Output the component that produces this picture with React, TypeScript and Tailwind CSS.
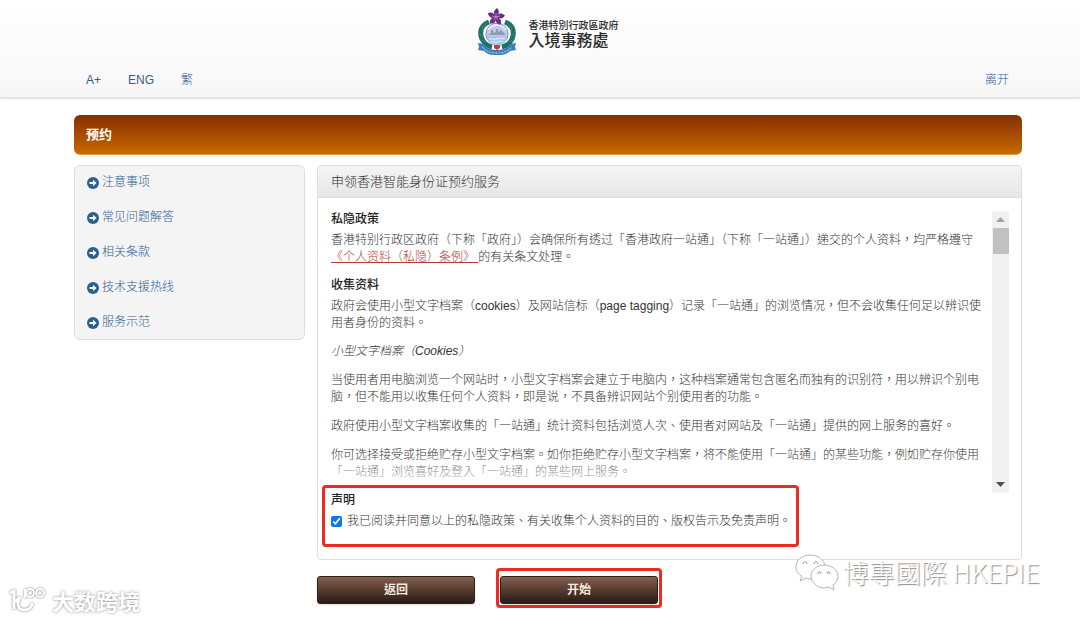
import { useState } from "react";

const menuItems = ["注意事项", "常见问题解答", "相关条款", "技术支援热线", "服务示范"];

const ArrowIcon = () => (
  <svg className="w-3 h-3 shrink-0" viewBox="0 0 12 12" aria-hidden="true">
    <circle cx="6" cy="6" r="6" fill="#2a6092" />
    <path d="M2.500 5H6V2.800L9.600 6 6 9.200V7H2.500z" fill="#fff" />
  </svg>
);

const Emblem = () => (
  <svg className="w-10 h-12" viewBox="0 0 40 48" fill="none" aria-hidden="true">
    {/* wreath */}
    <path d="M12 14C4 17 2 24 5 31c2 4 5 7 10 8" stroke="#1f6f63" strokeWidth="5" />
    <path d="M28 14c8 3 10 10 7 17-2 4-5 7-10 8" stroke="#1f6f63" strokeWidth="5" />
    <path d="M10 14l-3 5M5 18l1 6M2 25l4 4M4 32l5 2M30 14l3 5M35 18l-1 6M38 25l-4 4M36 32l-5 2" stroke="#4d9488" strokeWidth=".8" />
    {/* harbour */}
    <circle cx="20" cy="26" r="11" fill="#c3c9e8" stroke="#8391b4" />
    <path d="M10 28h20a10 10 0 0 1-20 0z" fill="#a9c5ea" />
    <path d="M11 27l3-2v-3h2v3l3-1v-3h2v3l3-2 5 5z" fill="#8f98b8" />
    <path d="M11 22c3-4 6-5 9-5s6 1 9 5" stroke="#e6e9f8" strokeWidth="2" />
    <path d="M12 31c3-1 5 1 8 0s5-1 8 0M14 34c2-1 4 1 6 0s4-1 6 0" stroke="#eef4fc" />
    {/* bauhinia */}
    <g fill="#6a2c86">
      <path d="M19 9c-3-3-3-6 1-9 3 3 2 6-1 9z" />
      <path d="M19 9c-3-3-3-6 1-9 3 3 2 6-1 9z" transform="rotate(72 19 9)" />
      <path d="M19 9c-3-3-3-6 1-9 3 3 2 6-1 9z" transform="rotate(144 19 9)" />
      <path d="M19 9c-3-3-3-6 1-9 3 3 2 6-1 9z" transform="rotate(216 19 9)" />
      <path d="M19 9c-3-3-3-6 1-9 3 3 2 6-1 9z" transform="rotate(288 19 9)" />
    </g>
    <path d="M19 9V5M19 9l4-1M19 9l2 3M19 9l-2 3M19 9l-4-1" stroke="#d9bfe4" strokeWidth=".6" />
    {/* ribbon */}
    <path d="M1 35l6 1c3 5 8 6 13 6s10-1 13-6l6-1-1 4 1 3-6 1c-4 4-8 4-13 4s-9 0-13-4l-6-1 1-3z" fill="#3e7fb8" />
    <path d="M5 39c5 5 9 6 15 6s10-1 15-6" stroke="#b9d4ea" strokeDasharray="2 1" />
    <path d="M17 37h6v3l-3 2-3-2z" fill="#c53a4c" />
  </svg>
);

const Header = () => (
  <header className="h-[98px] pl-[86px] pr-[71px] flex flex-col justify-between bg-gradient-to-b from-white to-[#f7f7f7] border-b border-[#e2e2e2] shadow-sm">
    <div className="flex justify-center items-center gap-3 pt-2">
      <Emblem />
      <div className="flex flex-col pt-1 text-[#2c2c2c]">
        <span className="text-[10px] leading-[14px] font-medium">香港特別行政區政府</span>
        <span className="text-base leading-4 font-medium">入境事務處</span>
      </div>
    </div>
    <nav className="flex items-center pb-2 text-xs leading-[17px] text-[#2f5f8f]">
      <a href="#" className="mr-[27px]">A+</a>
      <a href="#" className="mr-[27px]">ENG</a>
      <a href="#" className="font-light">繁</a>
      <a href="#" className="ml-auto font-light">离开</a>
    </nav>
  </header>
);

const Sidebar = () => (
  <aside className="w-[231px] shrink-0 px-3 bg-[#f4f4f4] border border-[#dedede] rounded-md">
    <ul className="flex flex-col gap-[18px] pt-2 pb-2">
      {menuItems.map((item) => (
        <li key={item}>
          <a href="#" className="flex items-center gap-[3px] text-xs leading-[17px] font-light text-[#2f5f8f]">
            <ArrowIcon />
            {item}
          </a>
        </li>
      ))}
    </ul>
  </aside>
);

const ScrollBar = () => (
  <div className="w-[17px] shrink-0 flex flex-col items-center justify-between bg-[#f1f1f1]" aria-hidden="true">
    <div className="w-full flex flex-col items-center">
      <svg className="w-[17px] h-[17px]" viewBox="0 0 17 17">
        <path d="M4 11l4.500-5 4.500 5z" fill="#a3a3a3" />
      </svg>
      <div className="w-4 h-[26px] bg-[#c1c1c1]" />
    </div>
    <svg className="w-[17px] h-[17px]" viewBox="0 0 17 17">
      <path d="M4 6h9l-4.500 5z" fill="#505050" />
    </svg>
  </div>
);

const Policy = () => (
  <div className="relative h-[282px] flex-1 min-w-0 overflow-hidden">
    <h3 className="font-medium mb-1 text-[#222]">私隐政策</h3>
    <p className="mb-[11px]">
      香港特别行政区政府（下称「政府」）会确保所有透过「香港政府一站通」（下称「一站通」）递交的个人资料，均严格遵守
      <br />
      <a href="#" className="text-[#b23b3b] underline decoration-[#b23b3b]">《个人资料（私隐）条例》 </a>
      的有关条文处理。
    </p>
    <h3 className="font-medium mb-1 text-[#222]">收集资料</h3>
    <p className="mb-[11px]">
      政府会使用小型文字档案（cookies）及网站信标（page tagging）记录「一站通」的浏览情况，但不会收集任何足以辨识使用者身份的资料。
    </p>
    <p className="mb-3 italic">小型文字档案（Cookies）</p>
    <p className="mb-3">
      当使用者用电脑浏览一个网站时，小型文字档案会建立于电脑内，这种档案通常包含匿名而独有的识别符，用以辨识个别电脑，但不能用以收集任何个人资料，即是说，不具备辨识网站个别使用者的功能。
    </p>
    <p className="mb-3">
      政府使用小型文字档案收集的「一站通」统计资料包括浏览人次、使用者对网站及「一站通」提供的网上服务的喜好。
    </p>
    <p>
      你可选择接受或拒绝贮存小型文字档案。如你拒绝贮存小型文字档案，将不能使用「一站通」的某些功能，例如贮存你使用「一站通」浏览喜好及登入「一站通」的某些网上服务。
    </p>
    <div className="absolute inset-x-0 bottom-0 h-10 bg-gradient-to-b from-transparent to-white" />
  </div>
);

const buttonClass =
  "w-[158px] h-7 rounded-[3px] border border-[#2b1d18] bg-gradient-to-b from-[#84604f] to-[#2a1b15] text-xs font-bold text-[#f6e9df] shadow-sm cursor-pointer";

const App = () => {
  const [agreed, setAgreed] = useState(true);

  return (
    <div className="relative min-h-screen bg-white text-xs leading-[17px] text-[#333] font-['Liberation_Sans','Noto_Sans_CJK_TC',sans-serif]">
      <Header />
      <main className="pl-[74px] pr-[58px] pt-[17px] pb-3">
        <h1 className="h-10 px-3 flex items-center rounded-md border-b border-[#e09a3a] bg-gradient-to-b from-[#852f00] to-[#c96a00] text-[13px] font-bold text-white">
          预约
        </h1>
        <div className="flex items-start gap-3 mt-[10px]">
          <Sidebar />
          <div className="flex-1 min-w-0">
            <section className="border border-[#dedede] rounded-[4px] pb-3">
              <h2 className="h-8 px-[13px] flex items-center border-b border-[#dedede] rounded-t-[4px] bg-gradient-to-b from-[#f5f5f5] to-[#e6e6e6] text-[13px] font-light">
                申领香港智能身份证预约服务
              </h2>
              <div className="flex pt-[13px] pl-[13px] pr-3 font-light">
                <Policy />
                <ScrollBar />
              </div>
              <div className="relative w-[477px] h-[62px] -mt-2 ml-1 pl-[6px] pt-1 border-[3px] border-[#ec2c22] rounded-[4px]">
                <h3 className="font-medium text-[#222]">声明</h3>
                <label className="flex items-center gap-[5px] mt-1 font-light whitespace-nowrap">
                  <input
                    type="checkbox"
                    className="w-[11px] h-[11px] shrink-0 accent-[#0b76ef]"
                    checked={agreed}
                    onChange={(e) => setAgreed(e.target.checked)}
                  />
                  我已阅读并同意以上的私隐政策、有关收集个人资料的目的、版权告示及免责声明。
                </label>
              </div>
            </section>
            <div className="flex items-start gap-[21px] mt-2">
              <button type="button" className={`${buttonClass} mt-2`}>返回</button>
              <div className="px-px pt-[5px] pb-px border-[3px] border-[#ec2c22] rounded-[4px]">
                <button type="button" className={`${buttonClass} block`}>开始</button>
              </div>
            </div>
          </div>
        </div>
      </main>

      <div className="absolute right-10 top-[552px] flex items-center text-[26px] leading-10 font-light text-white [text-shadow:1px_1px_1px_#888]">
        <svg className="w-12 h-10" viewBox="0 0 48 40" fill="#fff" stroke="#a5a5a5" strokeWidth=".8" aria-hidden="true">
          <path d="M15 3C7 3 1 8 1 15c0 4 2 7 6 9l-2 5 6-3c2 1 4 1 7 1 7-1 12-6 12-12C30 8 23 3 15 3z" />
          <path d="M29 13c-7 0-13 5-13 11s6 12 13 12l5-1 5 3-1-5c3-2 5-5 5-9 0-6-6-11-14-11z" />
          <path d="M8 12c0-3 4-3 4 0M19 12c0-3 4-3 4 0M23 22c0-3 3-3 3 0M32 22c0-3 3-3 3 0" fill="none" stroke="#777" />
        </svg>
        <span className="font-['Noto_Sans_CJK_TC',sans-serif]">博專國際 HKEPIE</span>
      </div>

      <div className="absolute left-2 top-[584px] flex items-center gap-1 text-[22px] leading-8 font-bold text-white [text-shadow:0_0_3px_#888]">
        <svg className="w-10 h-8 drop-shadow-[0_0_1px_#777]" viewBox="0 0 40 32" fill="none" stroke="#fff" strokeWidth="3" aria-hidden="true">
          <path d="M2 9l4-2v18M7 18l5-5M12 13c-4 7-2 13 4 13 5 0 8-3 8-7" />
          <path d="M17 5v9M18 9a4 4 0 1 1 8 0 4 4 0 0 1-8 0M28 9a4 4 0 1 1 8 0 4 4 0 0 1-8 0" strokeWidth="2" />
        </svg>
        <span className="font-['Noto_Sans_CJK_SC',sans-serif]">大数跨境</span>
      </div>
    </div>
  );
};

export default App;
